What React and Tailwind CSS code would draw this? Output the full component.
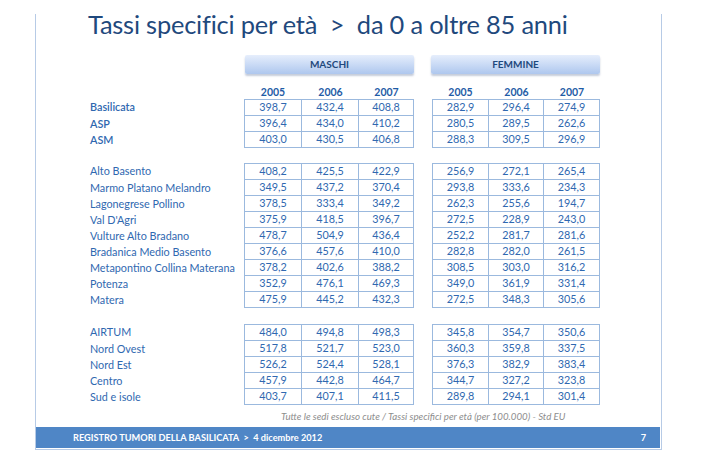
import React from 'react'

const groups = [
  {
    bold: true,
    rows: [
      ['Basilicata', '398,7', '432,4', '408,8', '282,9', '296,4', '274,9'],
      ['ASP', '396,4', '434,0', '410,2', '280,5', '289,5', '262,6'],
      ['ASM', '403,0', '430,5', '406,8', '288,3', '309,5', '296,9'],
    ],
  },
  {
    rows: [
      ['Alto Basento', '408,2', '425,5', '422,9', '256,9', '272,1', '265,4'],
      ['Marmo Platano Melandro', '349,5', '437,2', '370,4', '293,8', '333,6', '234,3'],
      ['Lagonegrese Pollino', '378,5', '333,4', '349,2', '262,3', '255,6', '194,7'],
      ["Val D'Agri", '375,9', '418,5', '396,7', '272,5', '228,9', '243,0'],
      ['Vulture Alto Bradano', '478,7', '504,9', '436,4', '252,2', '281,7', '281,6'],
      ['Bradanica Medio Basento', '376,6', '457,6', '410,0', '282,8', '282,0', '261,5'],
      ['Metapontino Collina Materana', '378,2', '402,6', '388,2', '308,5', '303,0', '316,2'],
      ['Potenza', '352,9', '476,1', '469,3', '349,0', '361,9', '331,4'],
      ['Matera', '475,9', '445,2', '432,3', '272,5', '348,3', '305,6'],
    ],
  },
  {
    rows: [
      ['AIRTUM', '484,0', '494,8', '498,3', '345,8', '354,7', '350,6'],
      ['Nord Ovest', '517,8', '521,7', '523,0', '360,3', '359,8', '337,5'],
      ['Nord Est', '526,2', '524,4', '528,1', '376,3', '382,9', '383,4'],
      ['Centro', '457,9', '442,8', '464,7', '344,7', '327,2', '323,8'],
      ['Sud e isole', '403,7', '407,1', '411,5', '289,8', '294,1', '301,4'],
    ],
  },
]

// column widths incl. borders: maschi 58/57/55, femmine 57/55/56
const mW = ['w-[58px] border-l', 'w-[57px]', 'w-[55px]']
const fW = ['w-[57px] border-l', 'w-[55px]', 'w-[56px]']

function Cells({ values, widths, first }) {
  return (
    <div className="flex">
      {values.map((v, i) => (
        <div
          key={i}
          className={`${widths[i]} ${first ? 'border-t' : ''} border-r border-b border-[#9bb9de] flex items-center justify-center`}>
          {v}
        </div>
      ))}
    </div>
  )
}

function Group({ group, className }) {
  return (
    <div className={className}>
      {group.rows.map((r, i) => (
        <div key={r[0]} className={`flex ${i === 0 ? 'h-[17px]' : 'h-[16px]'}`}>
          <div className={`w-[208px] pl-[54px] flex items-center ${group.bold ? 'font-semibold' : ''}`}>{r[0]}</div>
          <Cells values={r.slice(1, 4)} widths={mW} first={i === 0} />
          <div className="w-[18px]" />
          <Cells values={r.slice(4, 7)} widths={fW} first={i === 0} />
        </div>
      ))}
    </div>
  )
}

function SexTab({ label, className }) {
  return (
    <div
      className={`${className} h-[19px] rounded-[2px] bg-gradient-to-b from-[#e6eefc] to-[#aec7ee] shadow-[0_2px_2px_rgba(90,110,150,0.35)] flex items-center justify-center text-[10px] font-bold text-[#1f497d]`}>
      {label}
    </div>
  )
}

export default function App() {
  const years = ['2005', '2006', '2007']
  return (
    <div className="w-[701px] h-[460px] bg-white overflow-hidden" style={{ fontFamily: 'Lato, "Open Sans", sans-serif' }}>
      <div className="ml-[35px] mt-[14px] w-[627px] h-[436px] border-l border-r border-b border-[#b7cbe6] flex flex-col">
        <h1 className="-mt-[5px] h-[30px] leading-[30px] pl-[52px] text-[25.4px] text-[#1f497d] whitespace-pre tracking-[-0.2px]">
          Tassi specifici per età  &gt;  da 0 a oltre 85 anni
        </h1>

        <div className="mt-[16px] flex">
          <div className="w-[209px]" />
          <SexTab label="MASCHI" className="w-[169px]" />
          <div className="w-[17px]" />
          <SexTab label="FEMMINE" className="w-[169px]" />
        </div>

        <div className="mt-[11px] h-[14px] flex text-[10.5px] font-bold text-[#1f5ca6]">
          <div className="w-[208px]" />
          <div className="flex">
            {years.map((y, i) => (
              <div key={y} className={`${['w-[58px]', 'w-[57px]', 'w-[55px]'][i]} text-center leading-[14px]`}>{y}</div>
            ))}
          </div>
          <div className="w-[18px]" />
          <div className="flex">
            {years.map((y, i) => (
              <div key={y} className={`${['w-[57px]', 'w-[55px]', 'w-[56px]'][i]} text-center leading-[14px]`}>{y}</div>
            ))}
          </div>
        </div>

        <div className="text-[10.8px] text-[#2f68b0]">
          <Group group={groups[0]} />
          <Group group={groups[1]} className="mt-[15px]" />
          <Group group={groups[2]} className="mt-[16px]" />
        </div>

        <div className="h-[22px] flex items-center pl-[245px] text-[9.7px] italic text-[#8d8d8d]">
          Tutte le sedi escluso cute / Tassi specifici per età (per 100.000) - Std EU
        </div>

        <div className="mt-auto mb-[1px] mr-[1px] h-[21px] bg-[#4f86c6] flex items-center justify-between pl-[37px] pr-[14px] text-[9.2px] font-bold text-white">
          <span className="whitespace-pre">REGISTRO TUMORI DELLA BASILICATA  &gt;  4 dicembre 2012</span>
          <span>7</span>
        </div>
      </div>
    </div>
  )
}
